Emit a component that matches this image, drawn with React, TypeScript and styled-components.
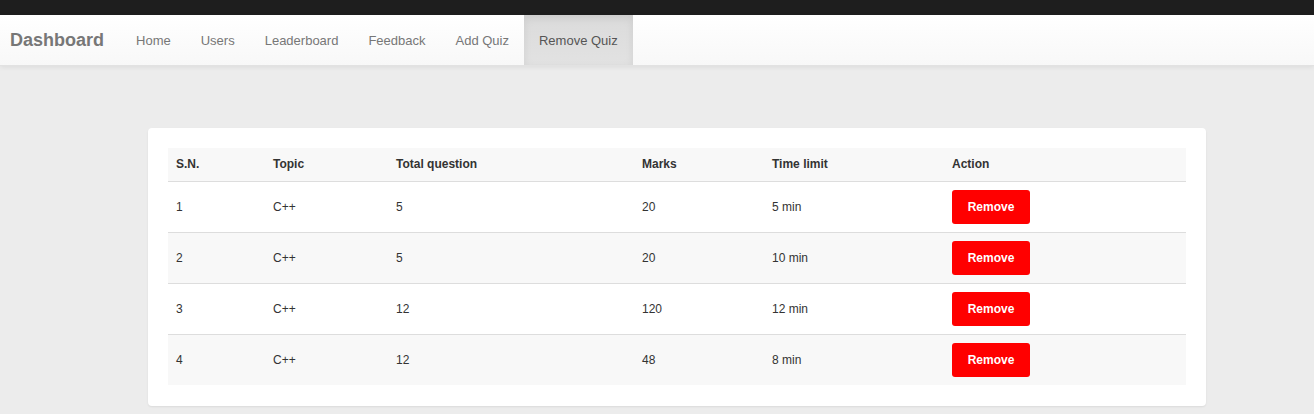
import React from "react";
import styled, { createGlobalStyle } from "styled-components";

const Global = createGlobalStyle`
  html, body { margin: 0; padding: 0; }
  body {
    background: #ececec;
    font-family: "Liberation Sans", Arial, sans-serif;
    color: #333;
  }
`;

const TopStrip = styled.div`
  height: 15px;
  background: #1e1e1e;
`;

const NavBar = styled.nav`
  display: flex;
  align-items: stretch;
  height: 50px;
  background: linear-gradient(#ffffff, #f8f8f8);
  border-bottom: 1px solid #e2e2e2;
  box-shadow: 0 1px 5px rgba(0, 0, 0, 0.075);
`;

const Brand = styled.a`
  display: flex;
  align-items: center;
  padding: 0 17px 0 10px;
  font-size: 18px;
  font-weight: bold;
  color: #777;
  text-decoration: none;
`;

const NavItem = styled.a<{ $active?: boolean }>`
  display: flex;
  align-items: center;
  padding: 0 15px;
  font-size: 13px;
  color: ${(p) => (p.$active ? "#555" : "#777")};
  text-decoration: none;
  background: ${(p) => (p.$active ? "linear-gradient(#dbdbdb, #e2e2e2)" : "transparent")};
  box-shadow: ${(p) => (p.$active ? "inset 0 3px 9px rgba(0,0,0,0.075)" : "none")};
`;

const Main = styled.main`
  padding: 62px 0 8px 148px;
`;

const Card = styled.section`
  width: 1018px;
  padding: 20px 20px 21px;
  background: #fff;
  border-radius: 4px;
  box-shadow: 0 1px 2px rgba(0, 0, 0, 0.08);
`;

const Table = styled.table`
  width: 1018px;
  table-layout: fixed;
  border-collapse: collapse;
  font-size: 12px;
  line-height: 17px;
`;

const HeadRow = styled.tr`
  background: #f8f8f8;
  border-bottom: 1px solid #ddd;
`;

const Th = styled.th<{ $w: number }>`
  box-sizing: border-box;
  width: ${(p) => p.$w}px;
  padding: 8px;
  text-align: left;
  font-weight: bold;
  color: #333;
`;

const Row = styled.tr<{ $striped?: boolean }>`
  background: ${(p) => (p.$striped ? "#f8f8f8" : "#fff")};
  & + & {
    border-top: 1px solid #ddd;
  }
`;

const Td = styled.td`
  padding: 8px;
  height: 34px;
  color: #333;
  vertical-align: middle;
`;

const RemoveButton = styled.button`
  width: 78px;
  height: 34px;
  border: none;
  border-radius: 3px;
  background: #ff0000;
  color: #fff;
  font-family: inherit;
  font-size: 12px;
  font-weight: bold;
  cursor: pointer;
`;

const columns = [
  { label: "S.N.", w: 97 },
  { label: "Topic", w: 123 },
  { label: "Total question", w: 246 },
  { label: "Marks", w: 130 },
  { label: "Time limit", w: 180 },
  { label: "Action", w: 242 },
];

const rows = [
  { sn: 1, topic: "C++", total: 5, marks: 20, time: "5 min" },
  { sn: 2, topic: "C++", total: 5, marks: 20, time: "10 min" },
  { sn: 3, topic: "C++", total: 12, marks: 120, time: "12 min" },
  { sn: 4, topic: "C++", total: 12, marks: 48, time: "8 min" },
];

const navItems = ["Home", "Users", "Leaderboard", "Feedback", "Add Quiz", "Remove Quiz"];

export default function App() {
  return (
    <>
      <Global />
      <TopStrip />
      <NavBar>
        <Brand href="#">Dashboard</Brand>
        {navItems.map((n) => (
          <NavItem key={n} href="#" $active={n === "Remove Quiz"}>
            {n}
          </NavItem>
        ))}
      </NavBar>
      <Main>
        <Card>
          <Table>
            <thead>
              <HeadRow>
                {columns.map((c) => (
                  <Th key={c.label} $w={c.w}>
                    {c.label}
                  </Th>
                ))}
              </HeadRow>
            </thead>
            <tbody>
              {rows.map((r, i) => (
                <Row key={r.sn} $striped={i % 2 === 1}>
                  <Td>{r.sn}</Td>
                  <Td>{r.topic}</Td>
                  <Td>{r.total}</Td>
                  <Td>{r.marks}</Td>
                  <Td>{r.time}</Td>
                  <Td>
                    <RemoveButton>Remove</RemoveButton>
                  </Td>
                </Row>
              ))}
            </tbody>
          </Table>
        </Card>
      </Main>
    </>
  );
}
